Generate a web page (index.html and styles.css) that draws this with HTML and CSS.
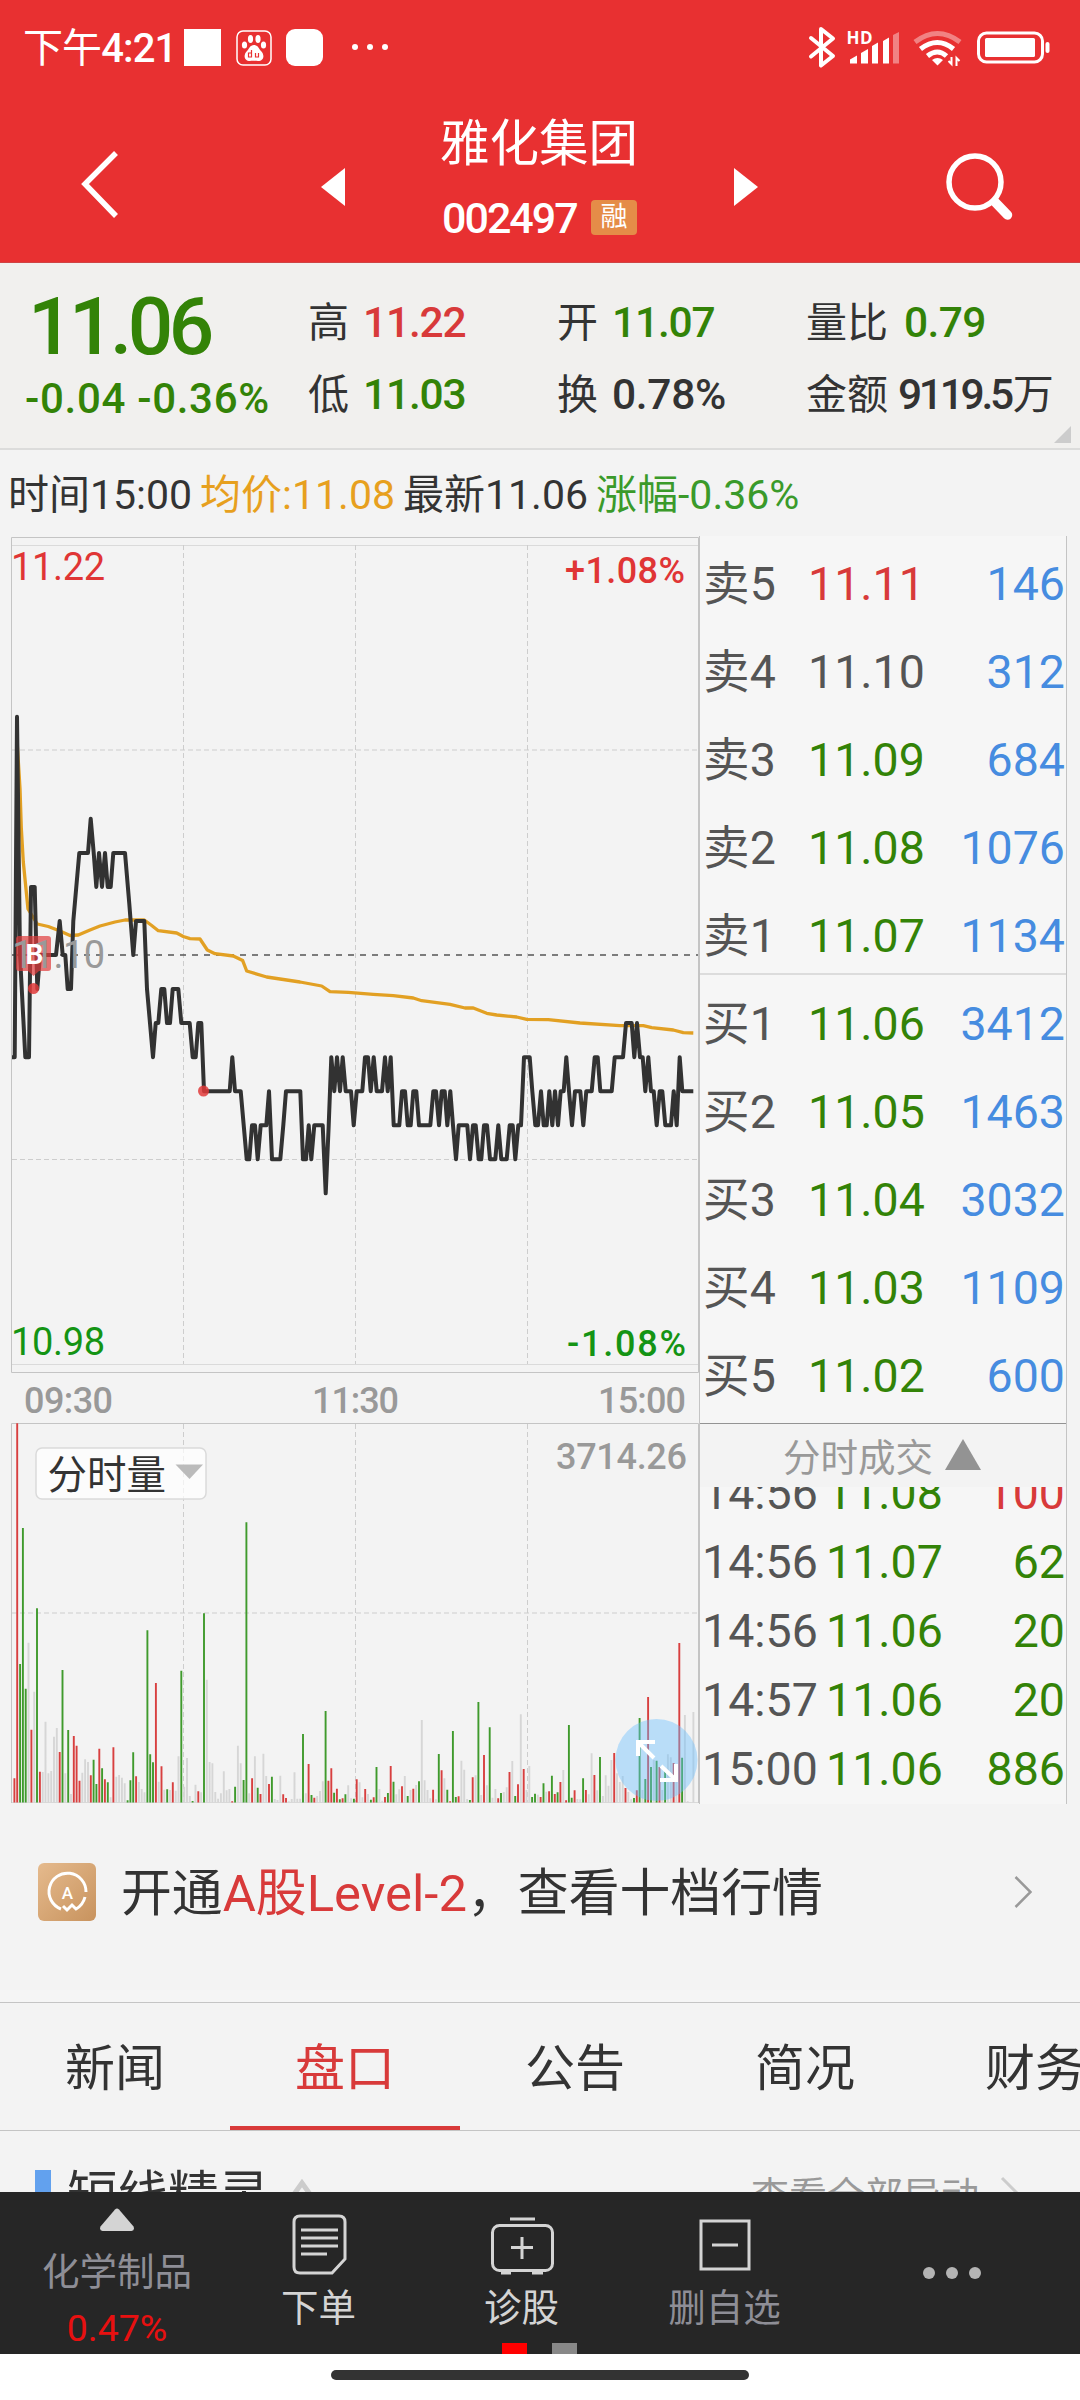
FILE: index.html
```html
<!DOCTYPE html>
<html lang="zh-CN">
<head>
<meta charset="utf-8">
<title>雅化集团 002497</title>
<link rel="stylesheet" href="styles.css">
</head>
<body>
<header class="top">
  <div class="status">
    <span class="clock"><em>下午</em>4:21</span>
    <svg class="notif" width="210" height="40" viewBox="184 28 210 40">
      <rect x="184" y="29" width="37" height="37" fill="#fff"/>
      <rect x="237" y="31" width="34" height="34" rx="6" fill="none" stroke="#fff" stroke-width="1.5"/>
      <g fill="#fff"><ellipse cx="250.500" cy="39" rx="2.600" ry="4"/><ellipse cx="258" cy="39" rx="2.600" ry="4"/><ellipse cx="244.500" cy="45" rx="2.600" ry="3.600"/><ellipse cx="263.500" cy="45" rx="2.600" ry="3.600"/><path d="M254 45c4 0 5 4 7 6 4 4 3 10-3 10-2 0-6-.5-8 0-6 0-7-6-3-10 2-2 3-6 7-6z"/></g>
      <path d="M251.500 50v7h-3v-4h3M255.500 53v4h3v-4" fill="none" stroke="#e83031" stroke-width="1.200"/>
      <rect x="286" y="29" width="37" height="37" rx="9" fill="#fff"/>
      <g fill="#fff"><circle cx="355" cy="47" r="3"/><circle cx="370" cy="47" r="3"/><circle cx="385" cy="47" r="3"/></g>
    </svg>
    <svg class="signals" width="245" height="44" viewBox="808 26 245 44">
      <path d="M811 38l22 18-12 9.500V29l12 9.500-22 18" fill="none" stroke="#fff" stroke-width="4" stroke-linejoin="round" stroke-linecap="round"/>
      <text x="846.500" y="43.500" class="hd" textLength="26">HD</text>
      <g fill="#fff"><path d="M850 63.500v-4l7-4v8zM861 63.500V53l7-4v14.500zM872 63.500V46l6-3.500v21zM883 63.500V41l6-3.500v26z"/><path d="M893 63.500V35l6-3v31.500z" opacity=".4"/></g>
      <g fill="none" stroke="#fff" stroke-width="5"><path d="M915 42q22.500-17 45 0" opacity=".4"/><path d="M920.500 49q17-13 33 0"/><path d="M927.500 56q10-8 19 0"/></g>
      <path d="M932 60q5.500-4 11 0l-5.500 5.500z" fill="#fff"/>
      <path d="M951.500 57v7l-3-3M956.500 66v-8l3 3" fill="none" stroke="#fff" stroke-width="2"/>
      <rect x="978.500" y="33" width="64" height="29" rx="8" fill="none" stroke="#fff" stroke-width="3"/>
      <rect x="985" y="38" width="50" height="19" rx="1.500" fill="#fff"/>
      <rect x="1045.500" y="42" width="4" height="11" rx="2" fill="#fff"/>
    </svg>
  </div>
  <div class="nav">
    <svg class="back" width="44" height="72" viewBox="78 148 44 72"><path d="M117 153L86 184l31 32" fill="none" stroke="#fff" stroke-width="5.500"/></svg>
    <svg class="prev" width="24" height="38" viewBox="0 0 24 38"><path d="M24 0v38L0 19z" fill="#fff"/></svg>
    <div class="title">
      <h1>雅化集团</h1>
      <div class="code"><span>002497</span><i>融</i></div>
    </div>
    <svg class="next" width="24" height="38" viewBox="0 0 24 38"><path d="M0 0v38l24-19z" fill="#fff"/></svg>
    <svg class="search" width="72" height="72" viewBox="944 150 72 72"><circle cx="975" cy="182" r="26" fill="none" stroke="#fff" stroke-width="5.500"/><path d="M995 202l12.500 13" stroke="#fff" stroke-width="9.500" stroke-linecap="round"/></svg>
  </div>
</header>

<section class="quote">
  <div class="last"><b>11.06</b><span>-0.04 -0.36%</span></div>
  <dl class="stats">
    <div><dt>高</dt><dd class="up">11.22</dd></div>
    <div><dt>开</dt><dd class="down">11.07</dd></div>
    <div><dt>量比</dt><dd class="down">0.79</dd></div>
    <div><dt>低</dt><dd class="down">11.03</dd></div>
    <div><dt>换</dt><dd class="turnover">0.78%</dd></div>
    <div><dt>金额</dt><dd class="amount">9119.5<em>万</em></dd></div>
  </dl>
  <svg class="corner" width="17" height="17" viewBox="0 0 17 17"><path d="M17 0v17H0z" fill="#ccc"/></svg>
</section>

<div class="info"><span>时间15:00</span><span class="avg">均价:11.08</span><span>最新11.06</span><span class="chg">涨幅-0.36%</span></div>

<main class="market">
  <svg id="chart" class="chart" width="699" height="1268" viewBox="0 536 699 1268">
    <g class="frame">
      <path d="M11.500 1372.500V537.500H698.500V1372.500H11.500M11.500 1803V1423.500H698.500V1803"/>
      <path d="M12 1802.500H698" class="faint"/>
      <path d="M12 545.500H698M12 1364.500H698" class="faint"/>
    </g>
    <g class="grid">
      <path d="M183.500 545V1364M355.500 545V1364M527.500 545V1364M12 750H698M12 1159.500H698"/>
      <path d="M183.500 1424V1802M355.500 1424V1802M527.500 1424V1802M12 1613H698"/>
    </g>
    <path class="mid" d="M12 955H698"/>
    <g id="bars"></g>
    <path id="avg" class="avg-line"/>
    <path id="price" class="price-line"/>
    <g class="mark">
      <path d="M19 936h29q3 0 3 3v29q0 3-3 3H39l-5.500 5-5.500-5h-9q-3 0-3-3v-29q0-3 3-3z"/>
      <circle cx="33.500" cy="988.500" r="5.500"/><circle cx="203.500" cy="1091" r="5.500"/>
    </g>
    <text x="12" y="968" class="lab close" textLength="93">11.10</text>
    <text x="34.500" y="963.500" class="buy">B</text>
    <text x="11" y="580" class="lab red" textLength="94">11.22</text>
    <text x="565" y="583" class="lab num red" textLength="120">+1.08%</text>
    <text x="11" y="1355" class="lab green" textLength="94">10.98</text>
    <text x="567" y="1356" class="lab num green" textLength="119">-1.08%</text>
    <text x="24" y="1412.500" class="lab num gray" textLength="89">09:30</text>
    <text x="312" y="1412.500" class="lab num gray" textLength="87">11:30</text>
    <text x="598" y="1412.500" class="lab num gray" textLength="88">15:00</text>
    <text x="556" y="1469" class="lab num gray" textLength="131">3714.26</text>
    <g class="picker">
      <rect x="36" y="1448" width="170" height="51" rx="6"/>
      <text x="47.500" y="1489">分时量</text>
      <path d="M175.500 1464.500h27.500L189.500 1479z"/>
    </g>
    <g class="expand"><circle cx="656.500" cy="1760" r="41"/><path d="M638 1756v-14h17M639 1743l15 15M660 1780h16v-16M661 1766l15 14"/></g>
  </svg>
  <aside class="book">
    <ul class="levels">
      <li><span>卖5</span><b class="up">11.11</b><i>146</i></li>
      <li><span>卖4</span><b>11.10</b><i>312</i></li>
      <li><span>卖3</span><b class="down">11.09</b><i>684</i></li>
      <li><span>卖2</span><b class="down">11.08</b><i>1076</i></li>
      <li><span>卖1</span><b class="down">11.07</b><i>1134</i></li>
    </ul>
    <ul class="levels bids">
      <li><span>买1</span><b class="down">11.06</b><i>3412</i></li>
      <li><span>买2</span><b class="down">11.05</b><i>1463</i></li>
      <li><span>买3</span><b class="down">11.04</b><i>3032</i></li>
      <li><span>买4</span><b class="down">11.03</b><i>1109</i></li>
      <li><span>买5</span><b class="down">11.02</b><i>600</i></li>
    </ul>
    <h2>分时成交<svg width="36" height="31" viewBox="0 0 36 31"><path d="M18 0l18 31H0z" fill="#939393"/></svg></h2>
    <div class="ticks"><ul>
      <li><span>14:56</span><b>11.08</b><i class="up">100</i></li>
      <li><span>14:56</span><b>11.07</b><i>62</i></li>
      <li><span>14:56</span><b>11.06</b><i>20</i></li>
      <li><span>14:57</span><b>11.06</b><i>20</i></li>
      <li><span>15:00</span><b>11.06</b><i>886</i></li>
    </ul></div>
  </aside>
</main>

<div class="promo">
  <svg width="58" height="58" viewBox="0 0 58 58">
    <defs><linearGradient id="gold" x1="0" y1="0" x2="1" y2="1"><stop offset="0" stop-color="#e5ba8d"/><stop offset="1" stop-color="#c8935e"/></linearGradient></defs>
    <rect width="58" height="58" rx="6" fill="url(#gold)"/>
    <path d="M23 46A18.500 18.500 0 1 1 48 29M47 34Q45 42 38 46l-4-4-5 5-4-4" fill="none" stroke="#fff" stroke-width="3"/>
    <text x="29.500" y="36" class="a">A</text>
  </svg>
  <p>开通<em>A股Level-2</em>，查看十档行情</p>
  <svg width="18" height="34" viewBox="0 0 18 34"><path d="M1.500 2l15 15-15 15" fill="none" stroke="#999" stroke-width="2.500"/></svg>
</div>

<nav class="tabs"><a>新闻</a><a class="on">盘口</a><a>公告</a><a>简况</a><a>财务</a></nav>

<section class="next-section">
  <h3>短线精灵</h3>
  <svg width="24" height="20" viewBox="0 0 24 20"><path d="M2 18L12 4l10 14" fill="none" stroke="#ccc" stroke-width="5"/></svg>
  <span>查看全部异动</span>
  <svg width="20" height="34" viewBox="0 0 20 34"><path d="M2 2l15 15L2 32" fill="none" stroke="#ccc" stroke-width="3"/></svg>
</section>

<footer class="bar">
  <a class="sector"><svg width="36" height="24" viewBox="0 0 36 24"><path d="M16 1.500q2-2 4 0l14.500 17q1.500 4-2 4.500h-29q-3.500-.5-2-4.500z" fill="#d4d4d4"/></svg><span>化学制品</span><b>0.47%</b></a>
  <a><svg width="64" height="64" viewBox="286 2213 64 64" class="ico"><path d="M299 2216h39q6 0 6 6v37l-13 14h-32q-6 0-6-6v-45q0-6 6-6z"/><path d="M300 2230h37M300 2238h37M300 2246h37M300 2254h26"/></svg><span>下单</span></a>
  <a><svg width="64" height="64" viewBox="489 2213 64 64" class="ico"><rect x="491.500" y="2225.500" width="60" height="45" rx="7"/><path d="M509 2219h25M510 2247.500h22M521 2237v22M500 2273h10M531 2273h11"/></svg><span>诊股</span></a>
  <a class="dim"><svg width="64" height="64" viewBox="693 2213 64 64" class="ico"><rect x="701" y="2221" width="48" height="48"/><path d="M712 2245h26"/></svg><span>删自选</span></a>
  <a class="more"><svg width="60" height="14" viewBox="0 0 60 14" fill="#b4b4b4"><circle cx="7" cy="7" r="6"/><circle cx="30" cy="7" r="6"/><circle cx="53" cy="7" r="6"/></svg></a>
  <div class="pager"><i></i><i></i></div>
</footer>
<div class="home"><i></i></div>
<script src="chart.js"></script>
</body>
</html>
```
FILE: styles.css
```css
* { box-sizing: border-box; margin: 0; padding: 0; }
body { width: 1080px; height: 2400px; overflow: hidden; background: #f3f3f3; color: #333; font-family: Roboto, "Noto Sans CJK SC", sans-serif; }
svg { display: block; flex: none; }
ul { list-style: none; }
i, em { font-style: normal; }
.up { color: #d83a3a !important; }
.down { color: #338307; }

.top { height: 263px; background: #e83031; color: #fff; border-bottom: 1px solid #cf4444; }
.status { height: 96px; padding-left: 23px; display: flex; align-items: center; }
.clock { width: 161px; font-size: 40px; font-weight: 500; letter-spacing: -.9px; line-height: 96px; padding-top: 2px; white-space: nowrap; }
.clock em { font-weight: 400; }
.signals { margin-left: 414px; }
.hd { font: 700 17px "Open Sans", sans-serif; fill: #fff; }
.nav { height: 166px; display: flex; align-items: flex-start; }
.back { margin: 52px 0 0 77px; }
.prev { margin: 72px 0 0 200px; }
.title { width: 200px; margin: 15px 94px 0 95px; }
h1 { font-size: 49.500px; font-weight: 400; line-height: 66px; white-space: nowrap; }
.code { display: flex; align-items: center; margin-top: 6px; height: 70px; }
.code span { font-size: 43px; font-weight: 500; letter-spacing: -2px; width: 152px; margin-left: 2px; line-height: 70px; }
.code i { width: 46px; height: 35px; margin-top: -1px; margin-left: -3px; border-radius: 4px; background: #e58c48; font-size: 27px; line-height: 34px; text-align: center; }
.next { margin-top: 72px; }
.search { margin: 54px 0 0 186px; }

.quote { position: relative; height: 187px; padding-top: 24px; display: flex; background: #f1f0ee; border-bottom: 2px solid #dcdcdb; }
.last { width: 308px; padding-left: 25px; color: #338307; }
.last b { display: block; font-size: 80px; font-weight: 500; line-height: 80px; letter-spacing: -4.500px; padding-left: 3px; }
.last span { display: block; font-size: 42px; font-weight: 500; line-height: 64px; letter-spacing: .7px; white-space: nowrap; }
.stats { flex: 1; display: grid; grid-template-columns: 249px 249px 274px; grid-template-rows: 72px 72px; align-content: start; }
.stats div { display: flex; align-items: baseline; gap: 14px; line-height: 72px; white-space: nowrap; }
.stats dt { font-size: 41px; }
.stats dd { font-size: 42.500px; font-weight: 500; letter-spacing: -1.200px; }
.stats div:nth-child(3) dd { letter-spacing: -.6px; margin-left: 2px; }
.stats .turnover { letter-spacing: -.3px; }
.stats .amount { letter-spacing: -3.300px; margin-left: -4px; }
.amount em { font-size: 41px; font-weight: 400; margin-left: 2px; }
.corner { position: absolute; right: 9px; bottom: 5px; }

.info { height: 86px; padding-left: 8px; display: flex; gap: 8px; font-size: 41px; line-height: 90px; white-space: nowrap; }
.avg { color: #e7a01e; }
.chg { color: #3a9a2a; }

.market { height: 1268px; display: flex; }
.frame path { fill: none; stroke: #c4c4c4; }
.frame .faint { stroke: #dadada; }
.grid path { fill: none; stroke: #cdcdcd; stroke-dasharray: 5 3; }
.mid { stroke: #555; stroke-width: 1.500; stroke-dasharray: 6 6; }
.avg-line { fill: none; stroke: #e2a023; stroke-width: 3.300; stroke-linejoin: round; }
.price-line { fill: none; stroke: #323232; stroke-width: 4; stroke-linejoin: round; }
.r { stroke: #d83f3f; } .g { stroke: #3f9a2c; } .y { stroke: #d6d6d6; }
#bars path { stroke-width: 1.900; }
.lab { font-size: 38px; }
.num { font-weight: 500; font-size: 36px; }
.close, .gray { fill: #999; }
.red { fill: #e03535; } .green { fill: #149414; }
.num.gray { fill: #999; }
.mark path, .mark circle { fill: #e03a3a; fill-opacity: .85; }
.mark path { fill-opacity: .7; }
.buy { font-size: 28px; font-weight: 700; fill: #fff; text-anchor: middle; }
.picker rect { fill: #fff; fill-opacity: .7; stroke: #dadada; stroke-width: 1.500; }
.picker text { font-size: 39.500px; fill: #333; }
.picker path { fill: #bbb; }
.expand circle { fill: #69beff; fill-opacity: .42; }
.expand path { fill: none; stroke: #fff; stroke-width: 4; }

.book { width: 368px; height: 1268px; background: #f6f6f6; border-left: 1px solid #c4c4c4; border-right: 1px solid #c4c4c4; font-size: 46.500px; color: #555; }
.book b, .book i { font-weight: 400; }
.levels { height: 437px; }
.levels li { display: grid; grid-template-columns: 105px 1fr auto; height: 88px; line-height: 96px; padding: 0 1px 0 3px; overflow: hidden; white-space: nowrap; }
.levels span { letter-spacing: .2px; }
.levels i { color: #468ce0; }
.bids { height: 451px; border-top: 2px solid #dcdcdc; border-bottom: 1px solid #939393; }
.bids li:first-child { margin-top: 1px; }
.book h2 { height: 63px; padding: 0 0 2px 83px; display: flex; align-items: center; gap: 12px; background: #f3f3f3; color: #999; font-size: 37.500px; font-weight: 400; }
.ticks { height: 317px; overflow: hidden; }
.ticks ul { margin-top: -28px; }
.ticks li { display: grid; grid-template-columns: 124px 1fr auto; height: 69px; line-height: 69px; padding: 0 1px 0 2px; }
.ticks b, .ticks i { color: #338307; }

.promo { height: 186px; display: flex; align-items: flex-start; padding: 59px 48px 0 38px; }
.promo p { flex: 1; margin-left: 25px; font-size: 50.850px; line-height: 62px; white-space: nowrap; }
.promo em { color: #d83a3a; }
.promo > svg:last-child { margin-top: 12px; }
.a { font-size: 17px; font-weight: 500; fill: #fff; text-anchor: middle; }
.tabs { height: 141px; padding-top: 12px; display: flex; overflow: hidden; border-bottom: 1px solid #c4c4c4; background: linear-gradient(#f5f5f5 12px, #c4c4c4 12px, #c4c4c4 13px, #f3f3f3 13px); }
.tabs a { flex: none; width: 230px; height: 128px; font-size: 50px; line-height: 134px; text-align: center; white-space: nowrap; }
.tabs .on { color: #d83a3a; border-bottom: 4px solid #d83a3a; }
.next-section { height: 61px; overflow: hidden; display: flex; align-items: flex-start; padding: 39px 60px 0 35px; }
h3 { border-left: 16px solid #62a1ee; padding-left: 16px; font-size: 50.500px; font-weight: 400; line-height: 50px; height: 50px; margin-right: 21px; white-space: nowrap; }
.next-section > svg { margin-top: 9px; }
.next-section span { margin-left: auto; margin-right: 21px; font-size: 38px; line-height: 40px; margin-top: 6px; color: #999; }
.next-section > svg:last-child { margin-top: 6px; }

.bar { position: relative; height: 162px; background: #262626; color: #d4d4d4; display: flex; }
.bar a { width: 203px; display: flex; flex-direction: column; align-items: center; padding-top: 21px; font-size: 37.500px; line-height: 50px; }
.bar a span { margin-top: 6px; }
.bar .sector { width: 217px; padding: 16px 0 0 17px; color: #8e8e96; }
.bar .sector span { margin-top: 15px; }
.sector b { font-weight: 400; color: #e81010; margin-top: 6px; }
.dim span { color: #8e8e96; }
.bar .more { width: 252px; padding: 74px 0 0 0; }
.ico { fill: none; stroke: #d4d4d4; stroke-width: 3; }
.pager { position: absolute; left: 502px; bottom: 0; display: flex; gap: 25px; }
.pager i { width: 25px; height: 11px; background: #f00; }
.pager i + i { background: #888; }
.home { height: 46px; background: #fff; padding-top: 16px; }
.home i { display: block; width: 418px; height: 10px; margin: 0 auto; border-radius: 5px; background: #333; }
```
FILE: chart.js
```javascript
// Price path: minute offset (thirds of a pixel) and ticks below the previous close.
const price = `36 3,44 3,51 -7,60 0,76 3,87 3,93 -2,104 -2,112 1,120 0,168 0,179 -1,188 0,196 0,203 1,213 1,220 -1,229 -2,238 -3,264 -3,272 -4,281 -3,289 -2,297 -3,306 -2,315 -3,323 -2,332 -2,340 -3,375 -3,388 -1.5,400 0,408 -1,433 -1,441 1,450 2,459 3,467 2,475 2,484 1,493 1,501 2,510 2,518 1,535 1,544 2,569 2,578 3,587 3,595 2,604 2,612 4,689 4,697 3,705 4,722 4,731 5,740 6,748 6,756 5,765 5,773 6,782 5,799 5,807 4,816 6,841 6,850 5,858 4,901 4,909 6,918 6,926 5,934 6,943 5,968 5,977 7,986 5,994 3,1003 4,1011 3,1020 4,1028 3,1037 4,1053 4,1061 5,1070 4,1087 4,1095 3,1104 3,1112 4,1121 3,1130 4,1146 4,1155 3,1163 4,1172 3,1181 5,1198 5,1206 4,1215 4,1223 5,1232 5,1240 4,1249 4,1257 5,1291 5,1300 4,1308 4,1317 5,1325 4,1334 4,1342 5,1351 4,1359 5,1368 6,1376 5,1402 5,1410 6,1419 5,1427 5,1436 6,1444 6,1452 5,1461 5,1470 6,1486 6,1495 5,1504 6,1520 6,1529 5,1538 5,1546 6,1555 5,1563 5,1572 3,1589 3,1597 4,1606 5,1614 5,1623 4,1631 5,1640 5,1648 4,1657 5,1665 4,1674 5,1682 4,1691 4,1699 3,1707 4,1716 5,1725 4,1741 4,1750 5,1759 4,1775 4,1784 3,1793 3,1801 4,1835 4,1844 3,1869 3,1878 2,1895 2,1903 3,1911 2,1920 3,1928 3,1936 4,1945 3,1953 4,1961 4,1970 5,1979 4,1987 4,1996 5,2013 5,2021 4,2030 5,2039 3,2047 4,2080 4`;
document.getElementById('price').setAttribute('d', 'M' + price.split(',').map(p => {
  const [x, k] = p.split(' ');
  return (x / 3).toFixed(1) + ' ' + (955 + k * 34.05).toFixed(1);
}).join('L'));

const average = [51,740,60,788.5,64,828,70,862,84,909,112,924,145,926.5,180,931,210,935.5,235,935,270,930,300,926,345,922,375,920,433,920,455,925.5,475,930.7,530,933,550,936.5,570,938.6,600,939,622,950,645,953.7,700,956,728,960.6,740,971,800,977,900,982,965,986,990,991.6,1045,992.3,1120,994.3,1180,995.7,1240,998,1265,1000.7,1350,1004.3,1395,1008,1420,1008,1460,1013.3,1490,1015,1550,1017,1580,1019.3,1645,1019.7,1740,1023,1860,1025.7,1930,1025.7,1955,1027.7,2020,1030,2050,1032.7,2080,1033];
let line = '';
for (let i = 0; i < average.length; i += 2) line += (i ? 'L' : 'M') + (average[i] / 3).toFixed(1) + ' ' + average[i + 1];
document.getElementById('avg').setAttribute('d', line);

// Volume bars, one per minute; r = up, g = down, y = unchanged.
const volume = `r1255 r190 g912 g504 g986 y848 r1109 y995 g745 r1235 y1236 y1085 y1240 y1233 y1130 y1104 r1176 g930 y1240 g1110 y1302 r1128 r1157 r1262 y1238 y1198 y1206 r1246 g1199 g1272 r1166 g1225 r1258 g1267 y1312 r1162 y1250 y1245 y1253 y1270 g1321 g1261 g1177 r1249 y1266 y1287 y1297 g811 g1183 g1207 r969 y1265 r1219 y1289 g1288 y1290 r1267 y1292 y1189 g932 y1280 y1194 y1308 g1323 y1274 r1294 y1297 g760 y959 y1206 y1210 y1296 y1316 y1300 y1234 y1291 y1287 r1324 g1280 y1157 y1210 g1260 g487 y1300 r1255 y1189 g1283 r1302 y1181 y1248 r1272 g1250 y1317 y1320 y1247 r1303 r1314 y1324 y1317 y1237 y1316 y1316 g1122 y1300 r1212 g1305 r1313 y1308 y1293 y1264 g1053 r1262 r1225 g1298 r1286 g1318 r1315 g1303 y1276 y1315 g1316 r1258 y1267 y1312 r1287 y1302 g1319 r1312 g1221 y1287 y1322 r1311 g1299 r1218 g1265 y1303 y1288 r1279 y1248 g1308 y1290 r1286 y1275 g1264 y1080 y1261 y1290 y1315 r1289 y1318 g1182 r1231 y1255 g1289 r1324 g1113 g1311 r1309 y1202 y1229 y1317 g1320 r1252 y1246 g1026 y1305 r1185 y1276 g1102 y1313 y1287 r1315 g1299 y1296 y1282 r1236 y1203 g1308 r1273 y1063 r1227 y1290 y1218 g1311 g1301 y1304 r1311 g1270 y1295 r1294 g1247 r1302 g1297 r1266 y1230 r1321 g1095 g1313 r1291 y1317 y1318 g1255 r1290 y1303 y1180 r1245 y1291 g1191 y1308 y1246 y1277 y1200 r1179 y1240 y1266 y1248 r1284 y1296 y1318 g1314 r1291 g1074 y1290 g1257 r1011 g1221 y1200 g1202 r1221 y1290 g1230 y1183 y1192 r1209 y1240 r849 g1193 y1065 y1324 y1327 y1056`.split(' ');
const step = (2080 - 43) / (volume.length - 1) / 3;
const paths = { y: '', g: '', r: '' };
volume.forEach((v, i) => {
  paths[v[0]] += `M${(14.4 + i * step).toFixed(1)} 1802.5V${(1360 + v.slice(1) / 3).toFixed(1)}`;
});
document.getElementById('bars').innerHTML = Object.keys(paths).map(k => `<path class="${k}" d="${paths[k]}"/>`).join('');
```
